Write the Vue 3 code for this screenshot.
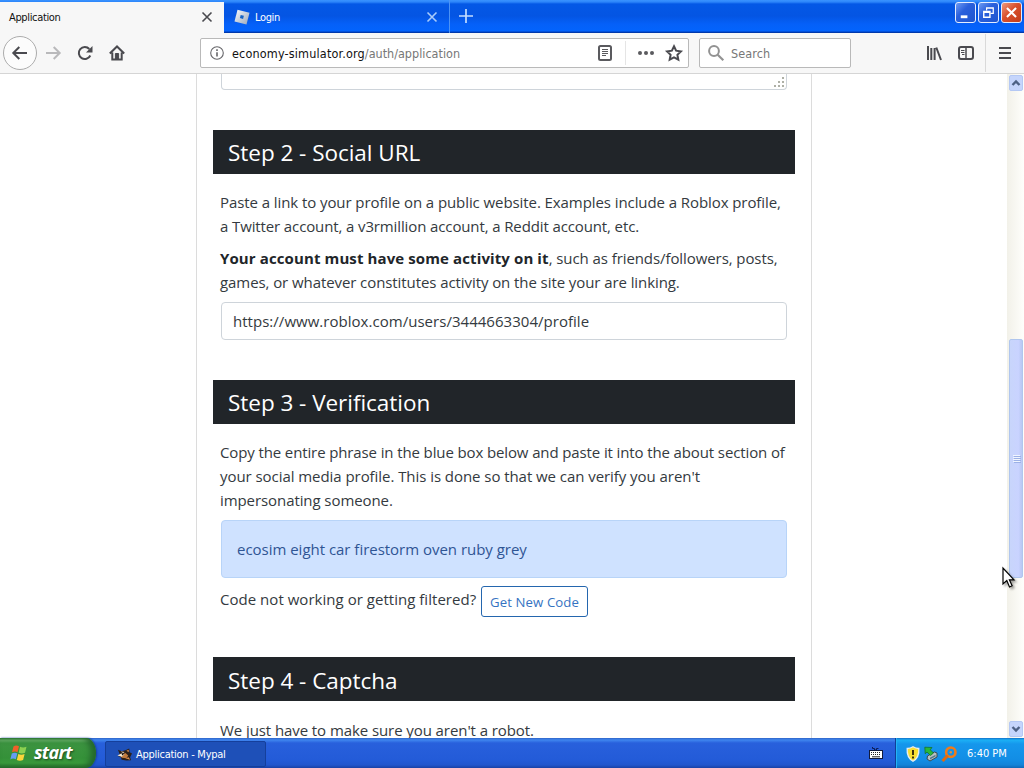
<template>
    <div class="desktop">
        <header class="tab-strip">
            <div class="tab active">
                <span class="tab-title">Application</span>
                <svg class="tab-close" viewBox="0 0 12 12"><path d="M1.5 1.5l9 9M10.5 1.5l-9 9" /></svg>
            </div>
            <div class="tab">
                <svg class="favicon" viewBox="0 0 16 16">
                    <defs>
                        <linearGradient id="fav" x1="0" y1="0" x2="1" y2="1">
                            <stop offset="0" stop-color="#f8fbff" />
                            <stop offset="1" stop-color="#9aa6b8" />
                        </linearGradient>
                    </defs>
                    <path d="M3.500 .8L15.500 3.800l-3 11.800L.5 12.600z" fill="url(#fav)" />
                    <path d="M6.700 5.900l3.200.8-.8 3.200-3.200-.8z" fill="#1763c4" />
                </svg>
                <span class="tab-title">Login</span>
                <svg class="tab-close" viewBox="0 0 12 12"><path d="M1.5 1.5l9 9M10.5 1.5l-9 9" /></svg>
            </div>
            <div class="new-tab">
                <svg viewBox="0 0 14 14"><path d="M7 0v14M0 7h14" /></svg>
            </div>
            <div class="window-buttons">
                <button class="win-btn"><svg viewBox="0 0 20 20"><path d="M5 14.500h7" stroke-width="3" /></svg></button>
                <button class="win-btn">
                    <svg viewBox="0 0 20 20"><path d="M8 8V5h7v6h-3M8 5.500h7" stroke-width="1.300" /><path d="M5 9h6.500v6H5zM5 9.700h6.500" stroke-width="1.500" /></svg>
                </button>
                <button class="win-btn close"><svg viewBox="0 0 20 20"><path d="M5.200 5.200l9.600 9.600M14.800 5.200l-9.600 9.600" stroke-width="2.200" /></svg></button>
            </div>
        </header>

        <nav class="toolbar">
            <div class="nav-buttons">
                <span class="back"><svg viewBox="0 0 16 16"><path d="M15 8H1.500M7.300 2L1.300 8l6 6" /></svg></span>
                <svg class="forward" viewBox="0 0 16 16"><path d="M1 8h13.500M8.700 2l6 6-6 6" /></svg>
                <svg class="reload" viewBox="0 0 16 16">
                    <path d="M13.300 10.500A6 6 0 1 1 12.300 4" />
                    <path d="M15.500 1v6.500H9z" fill="#4a4a4f" stroke="none" />
                </svg>
                <svg class="home" viewBox="0 0 16 16">
                    <path d="M.8 8.500L8 1.500l7.200 7M3.300 7.500V14.500h9.400V7.500" />
                    <path d="M6.400 14V8.500h3.200V14z" fill="#4a4a4f" stroke-width="1" />
                </svg>
            </div>
            <div class="url-bar">
                <svg class="info" viewBox="0 0 14 14">
                    <circle cx="7" cy="7" r="6.300" /><path d="M7 6.200v4.300M7 3.300v1.600" stroke-width="1.600" />
                </svg>
                <span class="url">economy-simulator.org<i>/auth/application</i></span>
                <svg class="reader" viewBox="0 0 16 16">
                    <rect x="2" y="1" width="12" height="14" rx="1.500" stroke-width="2" />
                    <path d="M5 4.500h6M5 6.500h6M5 8.500h6M5 10.500h4" stroke-width="1" />
                </svg>
                <span class="url-sep"></span>
                <svg class="dots" viewBox="0 0 16 4"><circle cx="2" cy="2" r="2" /><circle cx="8" cy="2" r="2" /><circle cx="14" cy="2" r="2" /></svg>
                <svg class="star" viewBox="0 0 16 16">
                    <path d="M8 1.300l2.100 4.400 4.800.7-3.500 3.400.9 4.900L8 12.400l-4.300 2.300.9-4.900L1.100 6.400l4.800-.7z" />
                </svg>
            </div>
            <div class="search-bar">
                <svg viewBox="0 0 16 16"><circle cx="6" cy="6" r="4.900" /><path d="M9.700 9.700l5.600 5.600" stroke-width="2.200" /></svg>
                <span>Search</span>
            </div>
            <div class="tools">
                <svg class="library" viewBox="0 0 16 16"><path d="M2 1v14M5.300 3v12M8.600 3v12M10.300 2.500L15 15" /></svg>
                <svg class="sidebar" viewBox="0 0 16 16">
                    <rect x="1" y="2" width="14" height="12" rx="2" stroke-width="2" />
                    <path d="M8 2v12" stroke-width="1.500" /><path d="M3 5.500h3.500M3 7.500h3.500M4 9.500h2.500" stroke-width="1" />
                </svg>
                <span class="tool-sep"></span>
                <svg class="menu" viewBox="0 0 12 12"><path d="M0 1h12M0 6h12M0 11h12" /></svg>
            </div>
        </nav>

        <div class="viewport">
            <main class="card">
                <div class="textarea-end">
                    <svg viewBox="0 0 10 10">
                        <path d="M8 0h2v2H8zM4 4h2v2H4zM8 4h2v2H8zM0 8h2v2H0zM4 8h2v2H4zM8 8h2v2H8z" />
                    </svg>
                </div>
                <section class="step">
                    <h3>Step 2 - Social URL</h3>
                    <p>
                        <span class="line">Paste a link to your profile on a public website. Examples include a Roblox profile,</span>
                        <span class="line snug">a Twitter account, a v3rmillion account, a Reddit account, etc.</span>
                    </p>
                    <p>
                        <span class="line"><b>Your account must have some activity on it</b>, such as friends/followers, posts,</span>
                        <span class="line">games, or whatever constitutes activity on the site your are linking.</span>
                    </p>
                    <div class="field">{{ profileUrl }}</div>
                </section>
                <section class="step">
                    <h3>Step 3 - Verification</h3>
                    <p>
                        <span class="line snug">Copy the entire phrase in the blue box below and paste it into the about section of</span>
                        <span class="line loose">your social media profile. This is done so that we can verify you aren't</span>
                        <span class="line">impersonating someone.</span>
                    </p>
                    <div class="phrase"><span>{{ phrase }}</span></div>
                    <div class="new-code">
                        <span class="question">Code not working or getting filtered?</span>
                        <button class="code-btn">Get New Code</button>
                    </div>
                </section>
                <section class="step last">
                    <h3>Step 4 - Captcha</h3>
                    <p><span class="line">We just have to make sure you aren't a robot.</span></p>
                </section>
            </main>
            <aside class="scrollbar">
                <span class="scroll-btn"><svg viewBox="0 0 10 10"><path d="M1.500 7L5 3.500 8.500 7" /></svg></span>
                <span class="thumb"><i v-for="n in 4" :key="n"></i></span>
                <span class="scroll-btn"><svg viewBox="0 0 10 10"><path d="M1.500 3L5 6.500 8.500 3" /></svg></span>
            </aside>
        </div>

        <footer class="taskbar">
            <div class="start">
                <svg viewBox="0 0 18 18">
                    <path d="M3.500 2.500Q6 .8 9 2.300L7.500 8.200Q5 6.800 2 8.300z" fill="#f0602a" />
                    <path d="M10 2.800q3 1.500 6.500 0L15 8.800q-3.300 1.500-6.300 0z" fill="#8cd051" />
                    <path d="M1.800 9.500q3-1.600 5.500-.1L5.800 15.300Q3 13.800.3 15.400z" fill="#659df5" />
                    <path d="M8.300 10q3 1.500 6.300 0l-1.500 6q-3.200 1.500-6.300 0z" fill="#fbd53b" />
                </svg>
                <span>start</span>
            </div>
            <div class="task">
                <svg viewBox="0 0 16 16">
                    <path d="M1 3l4 1.500 4-1 4-2 .5 4L16 7l-2 4 1 3-5 .5-5-1L4 11 1 9.500 3 8z" fill="#2c2019" />
                    <path d="M4 9l5-2.500 3 2.500-2 3-5-.5z" fill="#c07a3c" />
                    <path d="M.5 9l4-2L8 8l-3 2.500zM4 4.800l4 .4-1.500 1.300z" fill="#f6e8cf" />
                    <path d="M10 4l2.500-1v2.500zM9 12l3.500-1 1.500 2.500" fill="#d88a4a" />
                    <circle cx="6" cy="8" r=".9" fill="#111" />
                </svg>
                <span>Application - Mypal</span>
            </div>
            <svg class="keyboard" viewBox="0 0 14 12">
                <path d="M3.500 0v1.500h2V3h2V1.500h2" fill="none" stroke="#0b1c55" />
                <rect x=".5" y="3.500" width="13" height="8" fill="#fff" stroke="#101a3c" />
                <path d="M2 5.500h10M2 7.500h10" stroke="#222" stroke-dasharray="1 1" /><path d="M3 9.800h8" stroke="#222" />
            </svg>
            <div class="tray">
                <svg class="shield" viewBox="0 0 14 16">
                    <path d="M7 .8q3 1.800 5.800 1.700Q13.500 11.500 7 15.200.5 11.500 1.200 2.500 4 2.600 7 .8z" fill="#f7df33" stroke="#e9edf0" stroke-width="1.300" />
                    <path d="M7 4v5M7 10.500v2" stroke="#33270a" stroke-width="1.900" />
                </svg>
                <svg class="device" viewBox="0 0 14 16">
                    <path d="M3.500 10l7-4 2.500 1v4L6 15l-3-2z" fill="#b9c2c2" stroke="#3c4a50" />
                    <path d="M6 11.800l5.500-3v1.700L6 13.500z" fill="#57798c" />
                    <path d="M.8 1.200l7.200.3-1.700 2.300L9.500 7 6.500 9.500 3 6 1.200 7.800z" fill="#28b83a" stroke="#126b23" stroke-width=".7" />
                </svg>
                <svg class="lens" viewBox="0 0 16 16">
                    <circle cx="9.800" cy="6.200" r="4.700" fill="none" stroke="#f07b18" stroke-width="2.600" />
                    <path d="M6.700 9.500L1.500 15" stroke="#e06a10" stroke-width="3" />
                    <circle cx="9.800" cy="6.200" r="1.200" fill="#e58a3c" />
                </svg>
                <time>6:40 PM</time>
            </div>
        </footer>

        <svg class="cursor" viewBox="0 0 13 22">
            <path d="M1 1v16l3.800-3.500L7.500 20l2.600-1.200-2.700-6H12z" />
        </svg>
    </div>
</template>
<script setup>

import { ref } from 'vue'

const profileUrl = ref("https://www.roblox.com/users/3444663304/profile")
const phrase = ref("ecosim eight car firestorm oven ruby grey")

</script>
<style>
body {
    overflow: hidden;
}
</style>
<style scoped>
* {
    box-sizing: border-box;
}
svg {
    display: block;
    flex: none;
    overflow: visible;
}
button {
    padding: 0;
    font: inherit;
}
.desktop {
    position: relative;
    width: 1024px;
    height: 768px;
    display: flex;
    flex-direction: column;
    overflow: hidden;
    background: #fff;
    font-family: "DejaVu Sans Condensed", "DejaVu Sans", sans-serif;
    white-space: nowrap;
}

/* title bar */
.tab-strip {
    height: 33px;
    flex: none;
    display: flex;
    background: linear-gradient(#3a93ff 0, #2c85fa 2px, #0458e6 4px, #0455e3 16px, #0560f8 24px, #0364fd 31px, #003dbb 32px, #00349e 33px);
}
.tab {
    width: 226px;
    display: flex;
    align-items: center;
    padding: 1px 11px 0 10px;
    border-right: 1px solid #4c93f5;
    color: #fff;
    font-size: 11px;
}
.tab.active {
    width: 224px;
    margin-top: 2px;
    padding: 0 11px 1px 9px;
    border: 0;
    background: #f7f7f7;
    color: #111;
}
.tab-title {
    flex: 1;
    letter-spacing: -0.35px;
}
.favicon {
    width: 16px;
    height: 16px;
    margin-right: 5px;
}
.tab-close {
    width: 12px;
    height: 12px;
    fill: none;
    stroke: #a9ccfb;
    stroke-width: 1.6;
}
.active .tab-close {
    stroke: #4a4a4f;
}
.new-tab {
    flex: 1;
    padding: 9px 0 0 9px;
}
.new-tab svg {
    width: 14px;
    height: 14px;
    stroke: #c4ddff;
    stroke-width: 1.7;
}
.window-buttons {
    display: flex;
    gap: 2px;
    padding: 2px 2px 0 0;
}
.win-btn {
    width: 21px;
    height: 21px;
    border: 1px solid #e4edff;
    border-radius: 3px;
    background: linear-gradient(135deg, #6e9bf3, #2a60dc 40%, #1e55cf);
}
.win-btn.close {
    background: linear-gradient(135deg, #ee9a80, #d9502c 45%, #c23c1a);
}
.win-btn svg {
    width: 19px;
    height: 19px;
    fill: none;
    stroke: #fff;
}

/* navigation toolbar */
.toolbar {
    height: 41px;
    flex: none;
    display: flex;
    align-items: center;
    background: #f7f7f7;
    border-bottom: 1px solid #d5d5d5;
}
.toolbar svg {
    fill: none;
    stroke: #4a4a4f;
    stroke-width: 2;
}
.nav-buttons {
    width: 200px;
    display: flex;
    align-items: center;
    padding-left: 3px;
}
.back {
    width: 34px;
    height: 34px;
    display: flex;
    align-items: center;
    justify-content: center;
    border: 1px solid #acacac;
    border-radius: 50%;
    background: #fcfcfc;
}
.nav-buttons svg {
    width: 16px;
    height: 16px;
}
.toolbar .forward {
    margin-left: 8px;
    stroke: #b9b9bb;
}
.reload {
    margin-left: 16px;
}
.home {
    margin-left: 16px;
}
.url-bar {
    width: 489px;
    height: 30px;
    display: flex;
    align-items: center;
    padding: 0 6px 0 9px;
    border: 1px solid #b9b9b9;
    border-radius: 2px;
    background: #fff;
}
.url-bar .info {
    width: 14px;
    height: 14px;
    stroke: #66666a;
    stroke-width: 1.1;
}
.url {
    flex: 1;
    margin-left: 8px;
    font-size: 12.5px;
    letter-spacing: 0.17px;
    color: #111;
}
.url i {
    font-style: normal;
    letter-spacing: 0;
    color: #777;
}
.toolbar .reader {
    width: 16px;
    height: 16px;
    stroke: #5a5a5e;
}
.url-sep {
    width: 1px;
    height: 24px;
    margin: 0 12px;
    background: #e5e5e5;
}
.toolbar .dots {
    width: 16px;
    height: 4px;
    fill: #5a5a5e;
    stroke: none;
}
.star {
    width: 16px;
    height: 16px;
    margin-left: 12px;
}
.search-bar {
    width: 152px;
    height: 30px;
    display: flex;
    align-items: center;
    gap: 7px;
    margin-left: 10px;
    padding-left: 8px;
    border: 1px solid #b9b9b9;
    border-radius: 2px;
    background: #fff;
    color: #777;
    font-size: 12.5px;
    letter-spacing: 0.1px;
}
.search-bar svg {
    width: 16px;
    height: 16px;
    stroke: #929292;
}
.tools {
    flex: 1;
    display: flex;
    align-items: center;
    justify-content: flex-end;
    padding-right: 13px;
}
.tools svg {
    width: 16px;
    height: 16px;
}
.sidebar {
    margin-left: 16px;
}
.tool-sep {
    width: 1px;
    height: 38px;
    margin: 0 13px 0 11px;
    background: #d9d9d9;
}
.tools .menu {
    width: 12px;
    height: 12px;
}

/* page */
.viewport {
    height: 664px;
    display: flex;
    justify-content: space-between;
    overflow: hidden;
}
.card {
    width: 616px;
    margin-left: 196px;
    padding: 0 16px;
    border: solid #dcdcdc;
    border-width: 0 1px;
    color: #343a40;
    font-family: "Open Sans", "Noto Sans", sans-serif;
    font-size: 15px;
    line-height: 24px;
}
.textarea-end {
    height: 16px;
    display: flex;
    justify-content: flex-end;
    margin: 0 8px 40px;
    padding: 3px 2px 0 0;
    border: 1px solid #ced4da;
    border-top: 0;
    border-radius: 0 0 4px 4px;
}
.textarea-end svg {
    width: 10px;
    height: 10px;
    fill: #aeb0a6;
}
.step {
    margin-bottom: 40px;
}
h3 {
    height: 44px;
    margin: 0 0 16px;
    padding: 9px 15px 0;
    background: #212529;
    color: #fff;
    font-size: 22.5px;
    font-weight: 400;
    line-height: 28px;
    letter-spacing: -0.03px;
}
.last h3 {
    padding-top: 10px;
}
p {
    margin: 0 0 8px 7px;
}
.line {
    display: block;
    letter-spacing: -0.08px;
}
.line.snug {
    letter-spacing: -0.12px;
}
.line.loose {
    letter-spacing: -0.055px;
}
.line b {
    letter-spacing: 0.11px;
    color: #212529;
}
.last .line {
    padding-top: 1px;
}
.field {
    height: 38px;
    margin: 0 8px;
    padding: 6px 11px;
    border: 1px solid #ced4da;
    border-radius: 4px;
    letter-spacing: 0.03px;
}
.phrase {
    height: 58px;
    margin: 0 8px;
    padding: 16px 15px;
    border: 1px solid #b8d4f8;
    border-radius: 4px;
    background: #cfe2ff;
    color: #2f5594;
    letter-spacing: -0.02px;
}
.new-code {
    height: 31px;
    display: flex;
    gap: 5px;
    margin: 8px 0 0 7px;
}
.question {
    width: 256px;
    padding-top: 1px;
    letter-spacing: 0.03px;
}
.code-btn {
    width: 107px;
    height: 31px;
    border: 1px solid #2466ae;
    border-radius: 3px;
    background: #fff;
    color: #3573c2;
    font-size: 13.2px;
    letter-spacing: 0.1px;
}
.scrollbar {
    width: 17px;
    display: flex;
    flex-direction: column;
    align-items: center;
    padding: 1px 1px 0 2px;
    background: linear-gradient(90deg, #f2f1e9, #fefefb);
}
.scroll-btn {
    width: 14px;
    height: 16px;
    display: flex;
    align-items: center;
    justify-content: center;
    border: 1px solid #b4c8f4;
    border-radius: 2px;
    background: #c5d5fc;
}
.scroll-btn svg {
    width: 10px;
    height: 10px;
    fill: none;
    stroke: #4d6185;
    stroke-width: 2.4;
}
.thumb {
    width: 14px;
    height: 239px;
    display: flex;
    flex-direction: column;
    align-items: center;
    justify-content: center;
    gap: 1px;
    margin: 248px 0 143px;
    border: 1px solid #b0c6ee;
    border-radius: 2px;
    background: linear-gradient(90deg, #c8d5fb, #c9d3ff 70%, #b9c8f3);
}
.thumb i {
    width: 7px;
    height: 1px;
    background: #f0f5ff;
    box-shadow: 1px 1px #9cb1e6;
}

/* taskbar */
.taskbar {
    height: 30px;
    flex: none;
    display: flex;
    background: linear-gradient(#2f64c8 0, #3f86ef 2px, #2860dc 5px, #235bd8 22px, #2156cd 27px, #1941a5 30px);
    color: #fff;
    font-size: 11px;
}
.start {
    width: 96px;
    display: flex;
    align-items: center;
    gap: 6px;
    padding-left: 10px;
    border-radius: 0 10px 10px 0 / 0 15px 15px 0;
    background: linear-gradient(#2e7d32 0, #6cb56b 2px, #3c9440 5px, #359139 20px, #3a9b3c 25px, #256d29 30px);
    box-shadow: inset -5px 0 6px #23662c, 1px 0 2px #153f9c;
    font: italic bold 18px "Open Sans", sans-serif;
    text-shadow: 1px 1px 2px #1b4a1e;
}
.start svg {
    width: 18px;
    height: 18px;
}
.start span {
    letter-spacing: -0.7px;
    padding-bottom: 2px;
}
.task {
    width: 161px;
    height: 26px;
    display: flex;
    align-items: center;
    gap: 4px;
    margin: 3px 0 0 9px;
    padding-left: 11px;
    border: 1px solid #153f9b;
    border-radius: 2px;
    background: #1e50b8;
    letter-spacing: -0.27px;
}
.task svg {
    width: 15px;
    height: 15px;
}
.keyboard {
    width: 14px;
    height: 12px;
    margin: 9px 12px 0 auto;
}
.tray {
    width: 129px;
    display: flex;
    align-items: center;
    padding: 1px 0 0 10px;
    border-left: 1px solid #103f96;
    background: linear-gradient(#1270c9 0, #1bb0f5 2px, #1597ec 6px, #128de5 22px, #1383d8 27px, #0f67b6 30px);
    box-shadow: inset 1px 0 #24b4f5;
}
.shield {
    width: 14px;
    height: 16px;
}
.device {
    width: 14px;
    height: 16px;
    margin-left: 4px;
}
.lens {
    width: 16px;
    height: 16px;
    margin-left: 3px;
}
time {
    margin-left: 10px;
    letter-spacing: 0;
}
.cursor {
    position: absolute;
    left: 1002px;
    top: 567px;
    width: 13px;
    height: 22px;
    fill: #fff;
    stroke: #000;
    stroke-width: 1.2;
    filter: drop-shadow(2px 2px 1px rgba(0, 0, 0, 0.35));
}
</style>
